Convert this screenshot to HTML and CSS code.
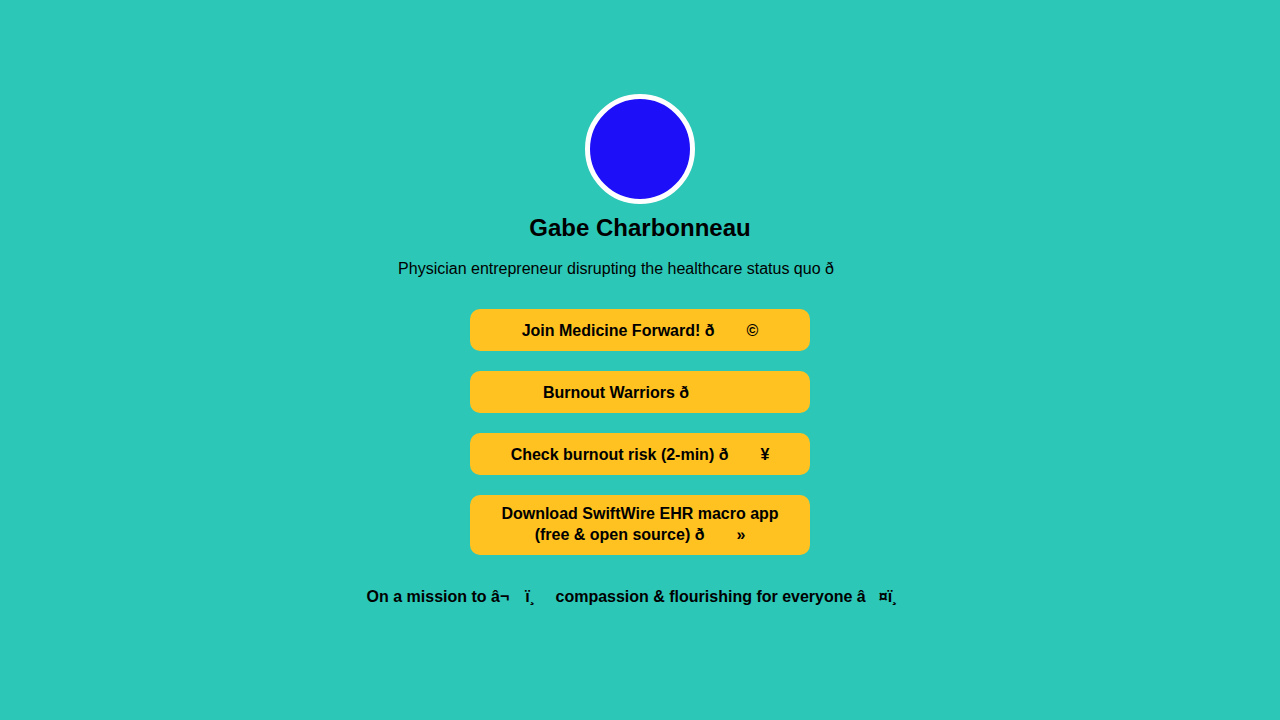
FILE: index.html
```html
<!DOCTYPE html>
<html lang="en">
<head>
<meta charset="utf-8">
<title>Gabe Charbonneau</title>
<link rel="stylesheet" href="styles.css">
</head>
<body>
<main class="page">
  <div class="profile">
    <div class="avatar"></div>
    <h1 class="name">Gabe Charbonneau</h1>
    <p class="bio">Physician entrepreneur disrupting the healthcare status quo ð<span class="cc" data-cc="9f 9a 80"></span></p>
    <nav class="links">
      <a class="link" href="#">Join Medicine Forward! ð<span class="cc" data-cc="9f 93"></span>©</a>
      <a class="link" href="#">Burnout Warriors ð<span class="cc" data-cc="9f 92 80"></span></a>
      <a class="link" href="#">Check burnout risk (2-min) ð<span class="cc" data-cc="9f 94"></span>¥</a>
      <a class="link" href="#">Download SwiftWire EHR macro app (free &amp; open source) ð<span class="cc" data-cc="9f 92"></span>»</a>
    </nav>
    <p class="mission">On a mission to â¬<span class="cc" data-cc="86"></span>ï¸<span class="cc" data-cc="8f"></span> compassion &amp; flourishing for everyone â<span class="cc" data-cc="9d"></span>¤ï¸<span class="cc" data-cc="8f"></span></p>
  </div>
</main>
<script src="script.js"></script>
</body>
</html>
```
FILE: styles.css
```css
html, body {
  margin: 0;
  padding: 0;
}
body {
  background: #2cc7b7;
  color: #000;
  font-family: "Liberation Sans", Arial, Helvetica, sans-serif;
  font-size: 16px;
  min-height: 720px;
}
.page {
  display: flex;
  justify-content: center;
  padding-top: 94px;
}
.profile {
  display: flex;
  flex-direction: column;
  align-items: center;
  text-align: center;
}
.avatar {
  width: 100px;
  height: 100px;
  border-radius: 50%;
  background: #1d10f8;
  border: 5px solid #fff;
}
.name {
  font-size: 24px;
  line-height: 28px;
  font-weight: bold;
  margin: 10px 0 0;
}
.bio {
  margin: 15px 0 0;
}
.cc {
  font-family: "Noto Sans", sans-serif;
  letter-spacing: 3px;
}
.links {
  display: flex;
  flex-direction: column;
  gap: 20px;
  margin-top: 30px;
}
.link {
  display: block;
  box-sizing: border-box;
  width: 340px;
  padding: 10px 24px;
  background: #ffc220;
  border-radius: 10px;
  color: #000;
  font-weight: bold;
  text-decoration: none;
}
.mission {
  margin: 30px 0 0;
  font-weight: bold;
}
```
FILE: script.js
```js
document.querySelectorAll('[data-cc]').forEach(function (el) {
  el.textContent = el.dataset.cc.split(' ').map(function (h) {
    return String.fromCharCode(parseInt(h, 16));
  }).join('');
});
```
